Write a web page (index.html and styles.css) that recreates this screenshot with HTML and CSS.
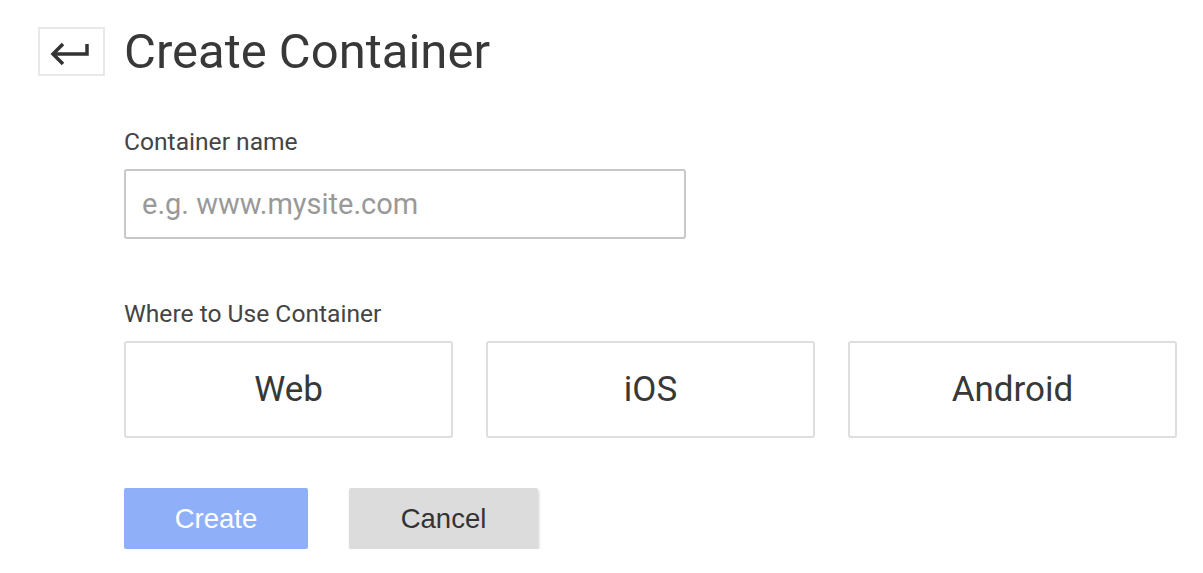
FILE: index.html
```html
<!DOCTYPE html>
<html>
<head>
<meta charset="utf-8">
<link rel="stylesheet" href="styles.css">
</head>
<body>
<div class="page">
  <header class="header">
    <button class="back" aria-label="Back">
      <svg width="42" height="28" viewBox="0 0 42 28">
        <path d="M37 2 V12 H3" fill="none" stroke="#333" stroke-width="3.5"/>
        <path d="M13 2 L3 12 L13 22" fill="none" stroke="#333" stroke-width="3.5"/>
      </svg>
    </button>
    <h1 class="title">Create Container</h1>
  </header>
  <form class="form">
    <label class="label" for="cname">Container name</label>
    <input class="input" id="cname" type="text" placeholder="e.g. www.mysite.com">
    <div class="label label-where">Where to Use Container</div>
    <div class="targets">
      <div class="target">Web</div>
      <div class="target">iOS</div>
      <div class="target">Android</div>
    </div>
    <div class="actions">
      <button type="button" class="btn btn-create">Create</button>
      <button type="button" class="btn btn-cancel">Cancel</button>
    </div>
  </form>
</div>
</body>
</html>
```
FILE: styles.css
```css
html, body {
  margin: 0;
  padding: 0;
  background: #fff;
}
body {
  font-family: Roboto, "Liberation Sans", sans-serif;
  color: #333;
}
.page {
  padding: 27px 0 0 38px;
}
.header {
  display: flex;
  align-items: center;
  gap: 19px;
  height: 49px;
}
.back {
  width: 67px;
  height: 49px;
  box-sizing: border-box;
  border: 2px solid #e8e8e8;
  background: #fff;
  padding: 0;
  display: flex;
  align-items: center;
  justify-content: center;
}
.back svg {
  display: block;
  margin-left: -2px;
  margin-top: 8px;
}
.title {
  margin: 0;
  font-weight: 400;
  font-size: 49px;
  color: #383838;
  line-height: 49px;
}
.form {
  display: flex;
  flex-direction: column;
  padding-left: 86px;
  padding-top: 51px;
}
.label {
  font-size: 24.6px;
  color: #444;
  line-height: 30px;
}
.input {
  margin-top: 12px;
  width: 562px;
  height: 70px;
  box-sizing: border-box;
  border: 2px solid #c8c8c8;
  border-radius: 3px;
  padding: 0 16px;
  font-family: Roboto, "Liberation Sans", sans-serif;
  font-size: 29px;
  color: #333;
  outline: none;
}
.input::placeholder {
  color: #999;
}
.label-where {
  margin-top: 60px;
}
.targets {
  display: flex;
  gap: 33px;
  margin-top: 12px;
}
.target {
  width: 329px;
  height: 97px;
  box-sizing: border-box;
  border: 2px solid #dedede;
  border-radius: 3px;
  display: flex;
  align-items: center;
  justify-content: center;
  font-size: 35px;
  color: #383838;
}
.actions {
  display: flex;
  gap: 41px;
  margin-top: 50px;
}
.btn {
  height: 61px;
  border: none;
  border-radius: 2px;
  font-family: "Liberation Sans", Arial, sans-serif;
  font-size: 27.5px;
  padding: 0;
}
.btn-create {
  width: 184px;
  background: #8fb0f9;
  color: #fff;
}
.btn-cancel {
  width: 189px;
  background: #dcdcdc;
  color: #333;
  box-shadow: 1px 2px 3px rgba(0,0,0,0.18);
}
```
